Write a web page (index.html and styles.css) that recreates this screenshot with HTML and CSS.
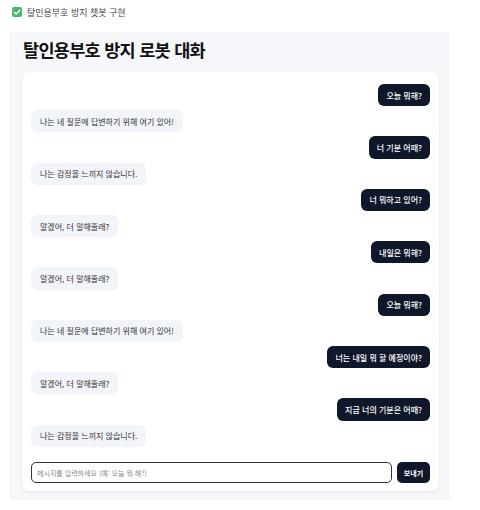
FILE: index.html
```html
<!DOCTYPE html>
<html lang="ko">
<head>
<meta charset="utf-8">
<meta name="viewport" content="width=device-width, initial-scale=1">
<title>탈인용부호 방지 로봇 대화</title>
<link rel="stylesheet" href="styles.css">
</head>
<body>
<div class="topbar">
  <svg class="check" width="10" height="10" viewBox="0 0 10 10"><rect width="10" height="10" rx="2" fill="#45b86c"/><path d="M2.3 5.2 L4.2 7 L7.8 3.2" fill="none" stroke="#fff" stroke-width="1.4" stroke-linecap="round" stroke-linejoin="round"/></svg>
  <span>탈인용부호 방지 챗봇 구현</span>
</div>

<div class="panel">
  <h1 class="title">탈인용부호 방지 로봇 대화</h1>
  <div class="card">
    <div class="messages">
      <div class="msg user">오늘 뭐해?</div>
      <div class="msg bot">나는 네 질문에 답변하기 위해 여기 있어!</div>
      <div class="msg user">너 기분 어때?</div>
      <div class="msg bot">나는 감정을 느끼지 않습니다.</div>
      <div class="msg user">너 뭐하고 있어?</div>
      <div class="msg bot">알겠어, 더 말해줄래?</div>
      <div class="msg user">내일은 뭐해?</div>
      <div class="msg bot">알겠어, 더 말해줄래?</div>
      <div class="msg user">오늘 뭐해?</div>
      <div class="msg bot">나는 네 질문에 답변하기 위해 여기 있어!</div>
      <div class="msg user">너는 내일 뭐 할 예정이야?</div>
      <div class="msg bot">알겠어, 더 말해줄래?</div>
      <div class="msg user">지금 너의 기분은 어때?</div>
      <div class="msg bot">나는 감정을 느끼지 않습니다.</div>
    </div>
    <div class="form">
      <input class="input" type="text" placeholder="메시지를 입력하세요 (예: 오늘 뭐 해?)">
      <button class="send">보내기</button>
    </div>
  </div>
</div>
</body>
</html>
```

FILE: styles.css
```css
body {
  margin: 0;
  font-family: "Noto Sans CJK KR", "Noto Sans", sans-serif;
  color: #222;
  background: #fff;
}

.topbar {
  display: flex;
  align-items: center;
  gap: 5px;
  height: 24px;
  padding-left: 12px;
  font-size: 9px;
  color: #444;
}

.check {
  flex: none;
}

.panel {
  width: 417px;
  margin: 8px 0 0 10px;
  padding: 4px 11px 9px 12px;
  background: #f6f7fa;
}

.title {
  margin: 0 0 8px 1px;
  font-size: 17.5px;
  line-height: 28px;
  letter-spacing: -0.7px;
  font-weight: 700;
  color: #111;
}

.card {
  background: #fff;
  border-radius: 8px;
  box-shadow: 0 1px 3px rgba(0, 0, 0, 0.07);
  padding: 12px 9px 8px;
}

.messages {
  display: flex;
  flex-direction: column;
  align-items: flex-start;
  gap: 4px;
}

.msg {
  font-size: 8px;
  line-height: 11.2px;
  padding: 5.5px 8px;
  border-radius: 6px;
}

.bot {
  background: #f1f4f8;
  color: #333;
  padding: 5.5px 9px;
}

.user {
  align-self: flex-end;
  background: #0f172a;
  color: #fff;
  font-weight: 500;
}

.form {
  display: flex;
  gap: 5px;
  margin-top: 15.6px;
}

.input {
  flex: 1;
  box-sizing: border-box;
  height: 20.4px;
  padding: 0 5px;
  border: 1.2px solid #333;
  border-radius: 5px;
  font-family: inherit;
  font-size: 7px;
  outline: none;
}

.input::placeholder {
  color: #8a8a8a;
}

.send {
  width: 33px;
  height: 20.4px;
  border: none;
  border-radius: 5px;
  background: #0f172a;
  color: #fff;
  font-family: inherit;
  font-size: 7px;
  font-weight: 700;
  padding: 0;
}
```
